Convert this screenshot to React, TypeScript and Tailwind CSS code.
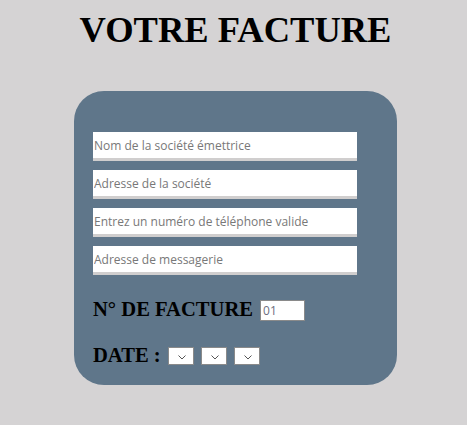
const fields = [
  "Nom de la société émettrice",
  "Adresse de la société",
  "Entrez un numéro de téléphone valide",
  "Adresse de messagerie",
];

const Chevron = () => (
  <svg width="8" height="5" viewBox="0 0 8 5" className="absolute right-[7px] top-[7px]">
    <path d="M0.5 0.5 L4 4 L7.5 0.5" fill="none" stroke="#555" strokeWidth="1" />
  </svg>
);

const DateSelect = () => (
  <div className="relative w-[26px] h-[18px] bg-white border border-[#8a8a8a]">
    <Chevron />
  </div>
);

export default function App() {
  return (
    <div className="w-[467px] h-[425px] bg-[#d5d3d4] pl-[4px] flex flex-col items-center font-['Liberation_Serif',serif]">
      <h1 className="mt-[12px] text-[36.5px] leading-[36px] font-bold text-black">VOTRE FACTURE</h1>

      <div className="mt-[43px] w-[323px] h-[294px] bg-[#5f768a] rounded-[30px] pl-[19px] pt-[41px] flex flex-col">
        <div className="flex flex-col gap-[9px]">
          {fields.map((f) => (
            <input
              key={f}
              placeholder={f}
              className="w-[264px] h-[29px] bg-white border-b-[3px] border-[#d0cece] pl-[1px] text-[12px] font-['Open_Sans',sans-serif] placeholder:text-[#787878] outline-none"
            />
          ))}
        </div>

        <div className="mt-[24px] flex items-start gap-[7px]">
          <span className="text-[20.6px] leading-[21px] font-bold text-black">N° DE FACTURE</span>
          <input
            defaultValue="01"
            className="mt-[1px] w-[45px] h-[21px] bg-white border border-[#8a8a8a] pl-[2px] text-[12px] text-[#6e6e80] font-['Open_Sans',sans-serif] outline-none"
          />
        </div>

        <div className="mt-[24px] flex items-start">
          <span className="text-[20.6px] leading-[21px] font-bold text-black">DATE :</span>
          <div className="mt-[2px] ml-[7px] flex gap-[7px]">
            <DateSelect />
            <DateSelect />
            <DateSelect />
          </div>
        </div>
      </div>
    </div>
  );
}
